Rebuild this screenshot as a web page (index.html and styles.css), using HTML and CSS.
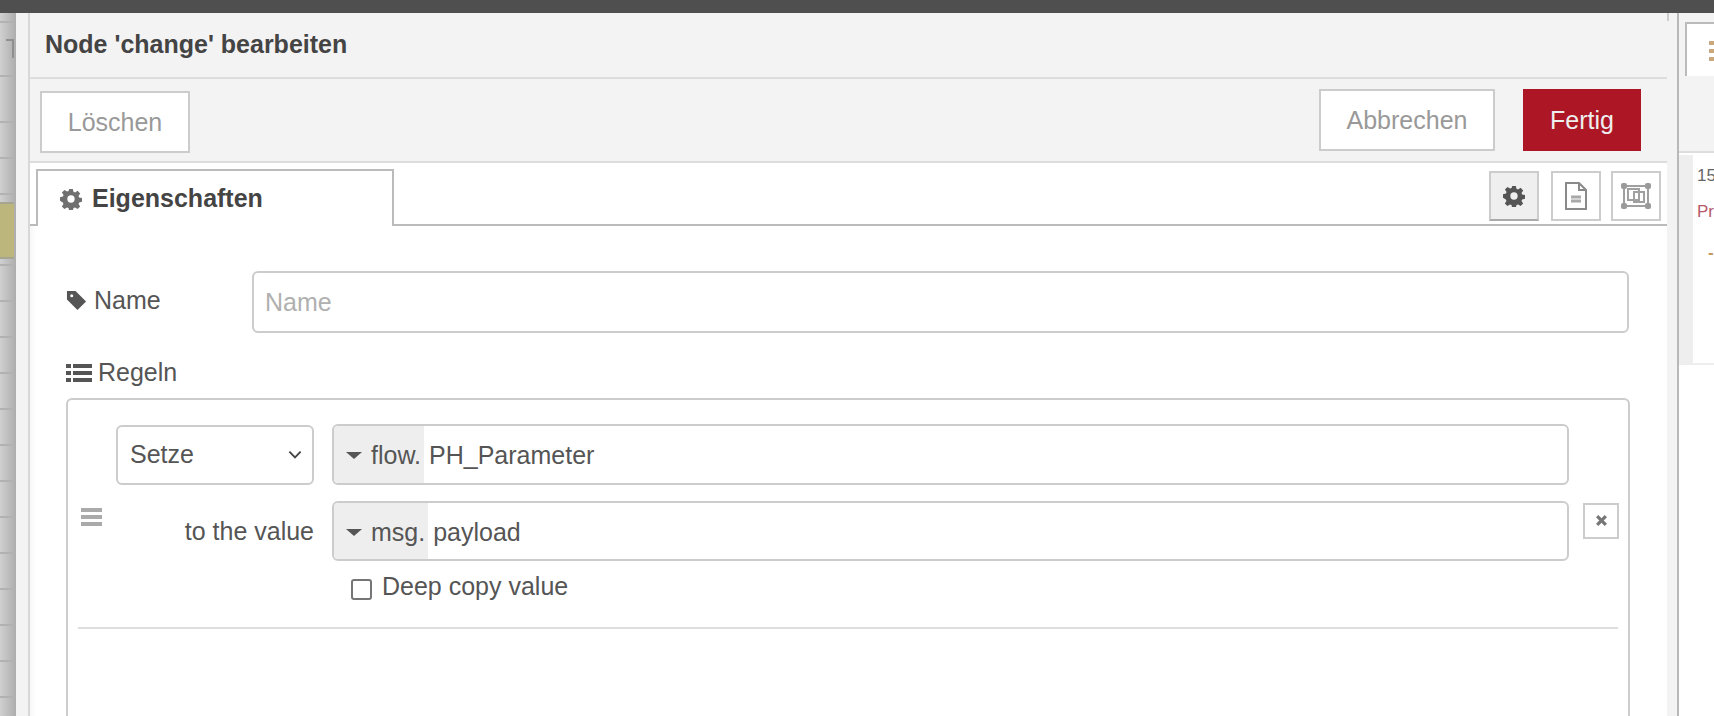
FILE: index.html
```html
<!DOCTYPE html>
<html lang="de">
<head>
  <meta charset="UTF-8" />
  <title>Node 'change' bearbeiten</title>
  <link rel="stylesheet" href="styles.css">
</head>
<body>
  <div class="topbar"></div>
  <div class="workspace">
    <div class="canvas">
      <div class="canvas-cell first"></div>
      <div class="canvas-cell tick"><span class="tick-mark"></span></div>
      <div class="canvas-cell tall"></div>
      <div class="canvas-cell"></div>
      <div class="canvas-cell"></div>
      <div class="canvas-node"></div>
      <div class="canvas-cell"></div>
      <div class="canvas-cell"></div>
      <div class="canvas-cell"></div>
      <div class="canvas-cell"></div>
      <div class="canvas-cell"></div>
      <div class="canvas-cell"></div>
      <div class="canvas-cell"></div>
      <div class="canvas-cell"></div>
      <div class="canvas-cell"></div>
      <div class="canvas-cell"></div>
      <div class="canvas-cell"></div>
      <div class="canvas-cell"></div>
      <div class="canvas-cell"></div>
    </div>
    <div class="tray-gutter"></div>

    <div class="tray">
      <div class="tray-title">Node 'change' bearbeiten</div>

      <div class="tray-buttons">
        <button class="btn btn-delete">Löschen</button>
        <div class="btn-group">
          <button class="btn btn-cancel">Abbrechen</button>
          <button class="btn btn-primary">Fertig</button>
        </div>
      </div>

      <div class="tabs">
        <div class="tab">
          <svg class="icon-gear" viewBox="0 0 24 24"><use href="#gear"/></svg>
          Eigenschaften
        </div>
        <div class="tab-tools">
          <div class="tool tool-active">
            <svg class="icon-gear-dark" viewBox="0 0 24 24"><use href="#gear"/></svg>
          </div>
          <div class="tool">
            <svg class="tool-icon" viewBox="0 0 24 28" fill="none" stroke="#8a8a8a" stroke-width="2">
              <path d="M2 1h13l7 7v19H2z"/>
              <path d="M15 1v7h7"/>
              <path d="M7 15h10M7 19h10" stroke="#a8a8a8" stroke-width="3"/>
            </svg>
          </div>
          <div class="tool">
            <svg class="tool-icon-wide" viewBox="0 0 30 26" fill="none" stroke="#a0a0a0" stroke-width="2">
              <rect x="3" y="3" width="24" height="20"/>
              <rect x="7" y="6" width="11" height="11"/>
              <rect x="13" y="9" width="10" height="10"/>
              <g fill="#9a9a9a" stroke="none">
                <rect width="6" height="6" rx="2"/><rect x="24" width="6" height="6" rx="2"/>
                <rect y="20" width="6" height="6" rx="2"/><rect x="24" y="20" width="6" height="6" rx="2"/>
              </g>
            </svg>
          </div>
        </div>
      </div>

      <div class="form">
        <div class="form-row">
          <label class="form-label">
            <svg class="icon-tag" viewBox="0 0 22 22"><path d="M1 1h9l11 11-9 9L1 10zM6 4.500a1.600 1.600 0 1 0 0 3.200 1.600 1.600 0 0 0 0-3.200z" fill="#555" fill-rule="evenodd"/></svg>
            Name
          </label>
          <input class="input" type="text" placeholder="Name">
        </div>

        <div class="rules-label">
          <svg class="icon-list" viewBox="0 0 26 20" fill="#555">
            <path d="M0 1h5v4H0zM7 1h19v4H7zM0 8h5v4H0zM7 8h19v4H7zM0 15h5v4H0zM7 15h19v4H7z"/>
          </svg>
          Regeln
        </div>

        <div class="rules">
          <div class="rule">
            <div class="handle"><i></i><i></i><i></i></div>
            <div class="rule-grid">
              <div class="select">Setze
                <svg class="chevron" viewBox="0 0 12 8"><path d="M1 1.500l5 5 5-5" fill="none" stroke="#444" stroke-width="1.700"/></svg>
              </div>
              <div class="typed">
                <div class="typed-prefix"><span class="caret"></span>flow.</div>
                <div class="typed-value">PH_Parameter</div>
              </div>
              <div class="value-label">to the value</div>
              <div class="typed typed-second">
                <div class="typed-prefix"><span class="caret"></span>msg.</div>
                <div class="typed-value">payload</div>
              </div>
              <label class="deep-copy"><span class="checkbox"></span>Deep copy value</label>
            </div>
            <div class="remove">
              <svg viewBox="0 0 12 12"><path d="M2 2l8 8M10 2l-8 8" stroke="#777" stroke-width="3"/></svg>
            </div>
          </div>
          <div class="rule-divider"></div>
        </div>
      </div>
    </div>

    <div class="tray-gutter right"><div class="gutter-tick"></div></div>

    <div class="sidebar">
      <div class="sidebar-head">
        <div class="sidebar-tab"><div class="sidebar-tab-icon"><i></i><i></i><i></i></div></div>
      </div>
      <div class="sidebar-body">
        <div class="debug-gutter"></div>
        <div class="debug-text">
          <div class="debug-line">15</div>
          <div class="debug-line debug-red">Pr</div>
          <div class="debug-line debug-orange">-</div>
        </div>
      </div>
    </div>
  </div>

  <svg class="defs" width="0" height="0">
    <defs>
      <path id="gear" fill-rule="evenodd" d="M10 1h4l.7 3.200 1.700.7 2.800-1.800 2.800 2.800-1.800 2.800.7 1.700 3.100.6v4l-3.100.7-.7 1.700 1.800 2.800-2.800 2.800-2.800-1.800-1.700.7-.7 3.100h-4l-.7-3.100-1.700-.7-2.800 1.800-2.800-2.800 1.800-2.800-.7-1.700L0 14v-4l3.200-.6.7-1.700-1.800-2.800 2.800-2.800 2.800 1.800 1.700-.7zM12 8a4 4 0 1 0 0 8 4 4 0 0 0 0-8z"/>
    </defs>
  </svg>
</body>
</html>
```

FILE: styles.css
```css
* {
  box-sizing: border-box;
}
body {
  margin: 0;
  height: 716px;
  overflow: hidden;
  display: flex;
  flex-direction: column;
  background: #fff;
  color: #555;
  font-family: "Liberation Sans", Arial, sans-serif;
  font-size: 25px;
}
.defs {
  position: absolute;
}
.topbar {
  height: 13px;
  flex: none;
  background: #4f4f4f;
}
.workspace {
  flex: 1;
  display: flex;
  min-height: 0;
  overflow: hidden;
}

/* canvas behind the tray */
.canvas {
  width: 16px;
  flex: none;
  background: linear-gradient(to right, #d0d0d0, #adadad);
  overflow: hidden;
}
.canvas-cell {
  height: 36px;
  width: 14px;
  border-bottom: 2px solid #b2b2b2;
}
.canvas-cell.first {
  height: 10px;
}
.canvas-cell.tick {
  height: 54px;
  position: relative;
}
.canvas-cell.tall {
  height: 46px;
}
.tick-mark {
  position: absolute;
  top: 16px;
  right: 0;
  width: 8px;
  height: 19px;
  border-top: 2px solid #8f8f8f;
  border-right: 2px solid #8f8f8f;
}
.canvas-node {
  height: 57px;
  width: 14px;
  margin: 7px 0 -29px;
  background: #bdb67c;
  border-top: 2px solid #a5a590;
  border-bottom: 2px solid #a5a590;
}
.tray-gutter {
  width: 12px;
  flex: none;
  background: #f3f3f3;
}
.tray-gutter.right {
  border-right: 2px solid #b8b8b8;
}
.gutter-tick {
  width: 2px;
  height: 8px;
  background: #ccc;
}

/* edit tray */
.tray {
  flex: 1;
  min-width: 0;
  display: flex;
  flex-direction: column;
  border-left: 2px solid #d8d8d8;
}
.tray-title {
  height: 66px;
  flex: none;
  padding: 17px 0 0 15px;
  background: #f3f3f3;
  border-bottom: 2px solid #ddd;
  color: #444;
  font-weight: bold;
}
.tray-buttons {
  height: 84px;
  flex: none;
  display: flex;
  justify-content: space-between;
  padding: 10px 26px 0 10px;
  background: #f3f3f3;
  border-bottom: 2px solid #ddd;
}
.btn-group {
  display: flex;
  gap: 28px;
}
.btn {
  height: 62px;
  padding: 0;
  background: #fff;
  border: 2px solid #ccc;
  color: #999;
  font-family: inherit;
  font-size: 25px;
}
.btn-delete {
  width: 150px;
  margin-top: 2px;
}
.btn-cancel {
  width: 176px;
}
.btn-primary {
  width: 118px;
  background: #ad1625;
  border-color: #ad1625;
  color: #eee;
}

/* tabs */
.tabs {
  height: 63px;
  flex: none;
  display: flex;
  justify-content: space-between;
  padding: 6px 6px 0 6px;
  border-bottom: 2px solid #bbb;
}
.tab {
  width: 358px;
  height: 59px;
  display: flex;
  align-items: center;
  gap: 10px;
  padding: 0 0 2px 22px;
  background: #fff;
  border: 2px solid #bbb;
  border-bottom: none;
  color: #444;
  font-weight: bold;
}
.icon-gear {
  width: 22px;
  height: 22px;
  fill: #707070;
}
.tab-tools {
  display: flex;
  gap: 10px;
  padding-top: 2px;
}
.tool {
  width: 50px;
  height: 50px;
  display: flex;
  align-items: center;
  justify-content: center;
  background: #fff;
  border: 2px solid #ccc;
}
.tool-active {
  background: #efefef;
  border-bottom-color: #aaa;
  margin-right: 2px;
}
.icon-gear-dark {
  width: 22px;
  height: 22px;
  fill: #555;
}
.tool-icon {
  width: 24px;
  height: 28px;
}
.tool-icon-wide {
  width: 30px;
  height: 26px;
}

/* form */
.form {
  flex: 1;
  min-height: 0;
  overflow: hidden;
  padding: 45px 0 0 36px;
  background: linear-gradient(to right, #f7f7f7, #fff 6px);
}
.form-row {
  display: flex;
  align-items: flex-start;
}
.form-label {
  width: 186px;
  flex: none;
  display: flex;
  align-items: center;
  gap: 7px;
  padding-top: 15px;
}
.icon-tag {
  width: 21px;
  height: 21px;
}
.input {
  width: 1377px;
  height: 62px;
  padding: 0 11px;
  border: 2px solid #ccc;
  border-radius: 6px;
  color: #555;
  font-family: inherit;
  font-size: 25px;
}
.input::placeholder {
  color: #b0b0b0;
  opacity: 1;
}
.rules-label {
  display: flex;
  align-items: center;
  gap: 6px;
  margin-top: 25px;
}
.icon-list {
  width: 26px;
  height: 20px;
}
.rules {
  width: 1564px;
  height: 400px;
  margin-top: 11px;
  padding: 0 10px;
  border: 2px solid #ccc;
  border-radius: 6px;
}
.rule {
  display: flex;
  align-items: center;
  padding-top: 24px;
}
.handle {
  width: 38px;
  flex: none;
  display: flex;
  flex-direction: column;
  gap: 3px;
  padding: 0 0 0 3px;
  margin-top: 8px;
}
.handle i {
  width: 21px;
  height: 4px;
  background: #aaa;
}
.rule-grid {
  width: 1453px;
  display: grid;
  grid-template-columns: 198px 1237px;
  column-gap: 18px;
  row-gap: 16px;
  align-items: center;
}
.select {
  height: 60px;
  display: flex;
  align-items: center;
  justify-content: space-between;
  padding: 0 10px 0 12px;
  border: 2px solid #ccc;
  border-radius: 6px;
}
.chevron {
  width: 14px;
  height: 9px;
}
.typed {
  height: 61px;
  display: flex;
  border: 2px solid #ccc;
  border-radius: 6px;
  overflow: hidden;
}
.typed-second {
  height: 60px;
}
.typed-prefix {
  display: flex;
  align-items: center;
  padding: 2px 3px 0 12px;
  gap: 9px;
  background: #eee;
}
.caret {
  width: 0;
  height: 0;
  border-left: 8px solid transparent;
  border-right: 8px solid transparent;
  border-top: 7px solid #555;
}
.typed-value {
  display: flex;
  align-items: center;
  padding: 2px 0 0 5px;
}
.value-label {
  text-align: right;
}
.deep-copy {
  grid-column: 2;
  display: flex;
  align-items: center;
  gap: 10px;
  margin: -5px 0 0 19px;
}
.checkbox {
  width: 21px;
  height: 21px;
  margin-top: 6px;
  border: 2px solid #767676;
  border-radius: 3px;
  background: #fff;
}
.remove {
  width: 36px;
  height: 36px;
  flex: none;
  display: flex;
  align-items: center;
  justify-content: center;
  margin: 16px 0 0 14px;
  border: 2px solid #ccc;
}
.remove svg {
  width: 13px;
  height: 13px;
}
.rule-divider {
  height: 2px;
  margin-top: 26px;
  background: #ddd;
}

/* debug sidebar */
.sidebar {
  width: 35px;
  flex: none;
  overflow: hidden;
}
.sidebar-head {
  height: 140px;
  padding: 9px 0 0 6px;
  background: #f3f3f3;
  border-bottom: 2px solid #ddd;
}
.sidebar-tab {
  height: 54px;
  width: 60px;
  padding: 17px 0 0 22px;
  background: #fff;
  border: 2px solid #bbb;
  border-bottom: none;
}
.sidebar-tab-icon {
  display: flex;
  flex-direction: column;
  gap: 4px;
}
.sidebar-tab-icon i {
  width: 12px;
  height: 4px;
  background: #c9a87c;
}
.sidebar-body {
  display: flex;
  height: 212px;
  padding-top: 2px;
  border-bottom: 2px solid #eee;
}
.debug-gutter {
  width: 14px;
  flex: none;
  background: #eee;
}
.debug-text {
  padding: 11px 0 0 4px;
  font-size: 17px;
  white-space: nowrap;
}
.debug-line {
  height: 36px;
  color: #666;
}
.debug-red {
  height: 41px;
  color: #b5596b;
}
.debug-orange {
  padding-left: 11px;
  color: #c59a5a;
  font-weight: bold;
}
```
